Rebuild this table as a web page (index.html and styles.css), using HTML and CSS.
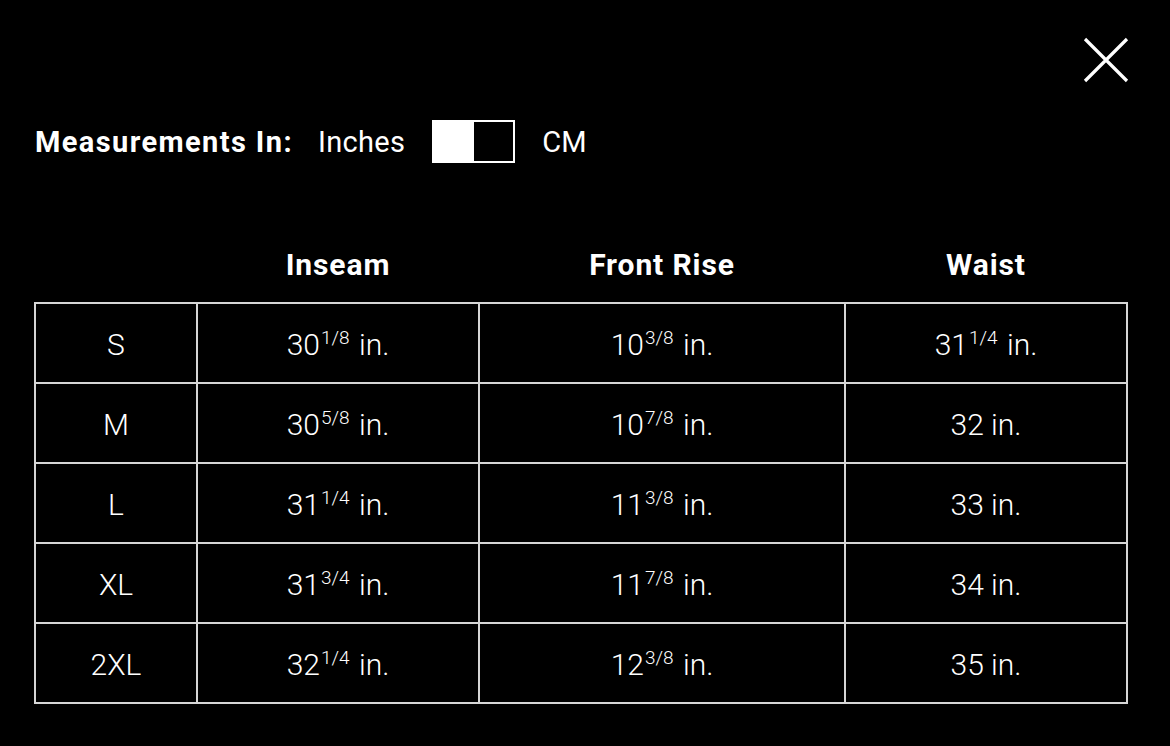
FILE: index.html
```html
<!DOCTYPE html>
<html>
<head>
<meta charset="utf-8">
<link rel="stylesheet" href="styles.css">
</head>
<body>
<div class="modal">
  <div class="topbar">
    <button class="close" aria-label="Close">
      <svg width="46" height="46" viewBox="0 0 46 46"><path d="M2 2 L44 44 M44 2 L2 44" stroke="#fff" stroke-width="3.2" fill="none"/></svg>
    </button>
  </div>
  <div class="units">
    <span class="units-label">Measurements In:</span>
    <span class="unit">Inches</span>
    <span class="toggle"><span class="knob"></span></span>
    <span class="unit">CM</span>
  </div>
  <table class="sizes">
    <colgroup>
      <col class="c1"><col class="c2"><col class="c3"><col class="c4">
    </colgroup>
    <thead>
      <tr><th></th><th>Inseam</th><th>Front Rise</th><th>Waist</th></tr>
    </thead>
    <tbody>
      <tr><td>S</td><td>30<sup>1/8</sup> in.</td><td>10<sup>3/8</sup> in.</td><td>31<sup>1/4</sup> in.</td></tr>
      <tr><td>M</td><td>30<sup>5/8</sup> in.</td><td>10<sup>7/8</sup> in.</td><td>32 in.</td></tr>
      <tr><td>L</td><td>31<sup>1/4</sup> in.</td><td>11<sup>3/8</sup> in.</td><td>33 in.</td></tr>
      <tr><td>XL</td><td>31<sup>3/4</sup> in.</td><td>11<sup>7/8</sup> in.</td><td>34 in.</td></tr>
      <tr><td>2XL</td><td>32<sup>1/4</sup> in.</td><td>12<sup>3/8</sup> in.</td><td>35 in.</td></tr>
    </tbody>
  </table>
</div>
</body>
</html>
```
FILE: styles.css
```css
html, body {
  margin: 0;
  padding: 0;
  background: #000;
  color: #fff;
  font-family: Roboto, "Liberation Sans", sans-serif;
}
.modal {
  width: 1170px;
  height: 746px;
  box-sizing: border-box;
  padding: 0 41px 0 34px;
}
.topbar {
  display: flex;
  justify-content: flex-end;
  padding-top: 37px;
}
.close {
  background: none;
  border: 0;
  padding: 0;
  width: 46px;
  height: 46px;
  cursor: pointer;
  display: block;
}
.close svg { display: block; }
.units {
  display: flex;
  align-items: center;
  margin-top: 37px;
  height: 43px;
  padding-left: 1px;
}
.units-label {
  font-weight: 700;
  font-size: 29px;
  letter-spacing: 1.4px;
  margin-right: 25px;
}
.unit {
  font-size: 29px;
  font-weight: 400;
  letter-spacing: 0.3px;
}
.toggle {
  width: 83px;
  height: 43px;
  box-sizing: border-box;
  border: 2px solid #fff;
  margin: 0 27px;
  display: flex;
}
.knob {
  width: 40px;
  height: 100%;
  background: #fff;
}
.sizes {
  margin-top: 56px;
  border-collapse: collapse;
  table-layout: fixed;
  width: 1094px;
}
.c1 { width: 162px; }
.c2 { width: 282px; }
.c3 { width: 366px; }
.c4 { width: 282px; }
.sizes th {
  font-weight: 700;
  font-size: 30px;
  letter-spacing: 0.9px;
  height: 76px;
  padding: 7px 0 0;
  text-align: center;
  vertical-align: middle;
}
.sizes td {
  border: 2px solid #d6d6d6;
  height: 75px;
  padding: 3px 0 0;
  text-align: center;
  vertical-align: middle;
  font-size: 30px;
  font-weight: 300;
}
.sizes sup {
  font-size: 19px;
  vertical-align: 0;
  position: relative;
  top: -11px;
  margin-left: 1px;
  margin-right: 2px;
}
```
